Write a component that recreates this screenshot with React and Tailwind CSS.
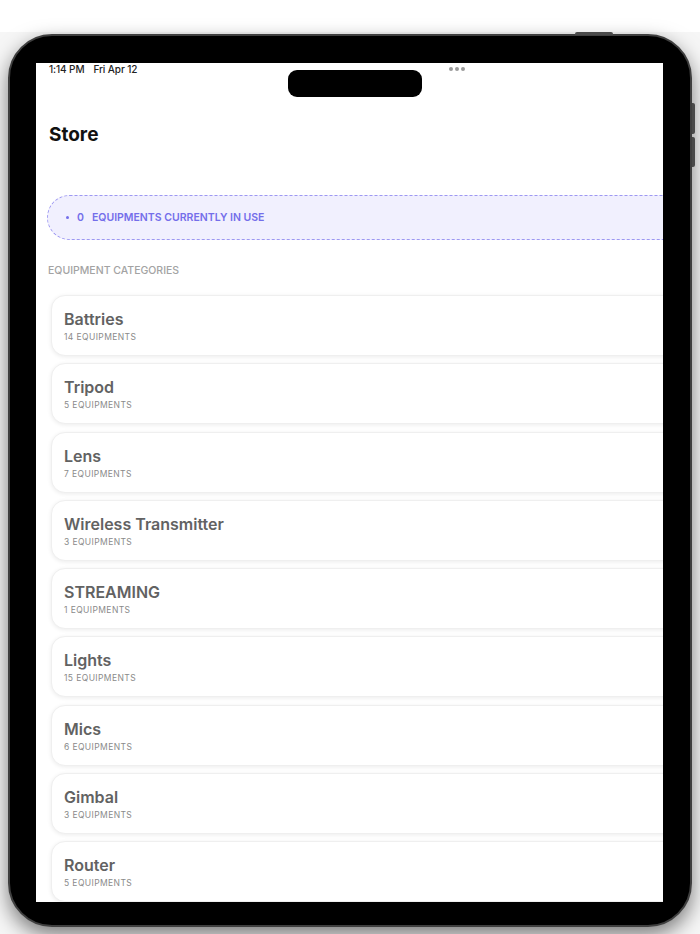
import React from "react";

const categories = [
  { name: "Battries", count: 14 },
  { name: "Tripod", count: 5 },
  { name: "Lens", count: 7 },
  { name: "Wireless Transmitter", count: 3 },
  { name: "STREAMING", count: 1 },
  { name: "Lights", count: 15 },
  { name: "Mics", count: 6 },
  { name: "Gimbal", count: 3 },
  { name: "Router", count: 5 },
];

const CategoryCard = ({ name, count }) => (
  <div className="h-[61px] w-[680px] shrink-0 rounded-[14px] bg-white border border-[#efefef] shadow-[0_1px_4px_rgba(0,0,0,0.08)] pl-[12px] pt-[14px]">
    <p className="text-[16px] leading-[18px] font-semibold text-[#626262]">{name}</p>
    <p className="mt-[3px] text-[8.5px] leading-[12px] tracking-[0.4px] text-[#8a8a8a]">
      {count} EQUIPMENTS
    </p>
  </div>
);

const App = () => {
  return (
    <div
      className="w-[700px] h-[934px] overflow-hidden bg-[#f6f6f6]"
      style={{ fontFamily: "Inter, 'Noto Sans', sans-serif" }}
    >
      <div className="h-[32px] bg-white" />

      {/* device frame */}
      <div className="relative ml-[8px] mt-[2px] w-[684px] h-[893px] rounded-[44px] bg-black border-2 border-[#3f3f3f] shadow-[0_8px_20px_rgba(0,0,0,0.5)] pl-[26px] pt-[27px]">
        {/* hardware buttons */}
        <div className="absolute left-[565px] top-[-4px] w-[38px] h-[3px] rounded-t-[2px] bg-[#4a4a4a]" />
        <div className="absolute right-[-5px] top-[67px] w-[3px] h-[31px] rounded-r-[2px] bg-[#4a4a4a]" />
        <div className="absolute right-[-5px] top-[101px] w-[3px] h-[30px] rounded-r-[2px] bg-[#4a4a4a]" />

        {/* screen */}
        <div className="relative w-[627px] h-[839px] bg-white overflow-hidden">
          {/* dynamic island */}
          <div className="absolute left-[252px] top-[7px] w-[134px] h-[27px] rounded-[9px] bg-black" />
          {/* multitasking dots */}
          <div className="absolute left-[413px] top-[4px] flex gap-[2px]">
            <span className="w-[4px] h-[4px] rounded-full bg-[#9a9a9a]" />
            <span className="w-[4px] h-[4px] rounded-full bg-[#9a9a9a]" />
            <span className="w-[4px] h-[4px] rounded-full bg-[#9a9a9a]" />
          </div>

          <div className="pl-[13px] h-[12px] flex items-center gap-[9px] text-[10px] leading-[12px] font-medium text-[#222] tracking-[-0.1px]">
            <span>1:14 PM</span>
            <span>Fri Apr 12</span>
          </div>

          <h1 className="mt-[49px] pl-[13px] text-[19px] leading-[22px] font-bold text-[#111]">Store</h1>

          <div className="mt-[49px] ml-[11px] w-[700px] h-[45px] rounded-full border border-dashed border-[#9d98f2] bg-[#f1f0fe] flex items-center pl-[18px] gap-[8px] text-[10.5px] font-semibold text-[#746eea]">
            <span className="w-[3px] h-[3px] rounded-full bg-[#746eea]" />
            <span>0</span>
            <span>EQUIPMENTS CURRENTLY IN USE</span>
          </div>

          <p className="mt-[24px] pl-[12px] text-[10.5px] leading-[14px] font-medium text-[#a3a3a3]">
            EQUIPMENT CATEGORIES
          </p>

          <div className="mt-[17px] ml-[15px] flex flex-col gap-[7.25px]">
            {categories.map((c) => (
              <CategoryCard key={c.name} name={c.name} count={c.count} />
            ))}
          </div>
        </div>
      </div>
    </div>
  );
};

export default App;
